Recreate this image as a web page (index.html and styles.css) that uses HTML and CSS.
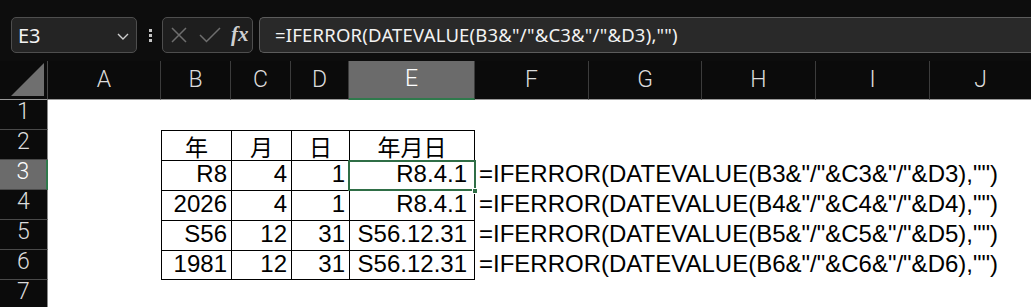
FILE: index.html
```html
<!DOCTYPE html>
<html lang="ja">
<head>
<meta charset="utf-8">
<title>Excel</title>
<link rel="stylesheet" href="styles.css">
</head>
<body>
<div class="app">
  <div class="toolbar">
    <div class="namebox">
      <span class="name">E3</span>
      <svg class="chev" width="12" height="7" viewBox="0 0 12 7"><path d="M1 1 L6 6 L11 1" fill="none" stroke="#cfcfcf" stroke-width="1.4"/></svg>
    </div>
    <div class="grip"><i></i><i></i><i></i></div>
    <div class="fxbox">
      <svg class="ico-x" width="16" height="16" viewBox="0 0 16 16"><path d="M1 1 L15 15 M15 1 L1 15" stroke="#6e6e6e" stroke-width="1.5" fill="none"/></svg>
      <svg class="ico-ok" width="22" height="16" viewBox="0 0 22 16"><path d="M1 8 L7.5 14.5 L21 1" stroke="#6e6e6e" stroke-width="1.5" fill="none"/></svg>
      <span class="fx">fx</span>
    </div>
    <div class="formula">=IFERROR(DATEVALUE(B3&amp;"/"&amp;C3&amp;"/"&amp;D3),"")</div>
  </div>

  <div class="sheet">
    <!-- header row -->
    <div class="corner"><svg width="33" height="33" viewBox="0 0 33 33"><path d="M0 33 L33 0 L33 33 Z" fill="#6f6f6f"/></svg></div>
    <div class="ch">A</div>
    <div class="ch">B</div>
    <div class="ch">C</div>
    <div class="ch">D</div>
    <div class="ch sel">E</div>
    <div class="ch">F</div>
    <div class="ch">G</div>
    <div class="ch">H</div>
    <div class="ch">I</div>
    <div class="ch last">J</div>

    <!-- row 1 -->
    <div class="rh">1</div>
    <div></div><div></div><div></div><div></div><div></div><div></div><div></div><div></div><div></div><div></div>

    <!-- row 2 -->
    <div class="rh">2</div>
    <div></div>
    <div class="t hd">年</div>
    <div class="t hd">月</div>
    <div class="t hd">日</div>
    <div class="t hd tr">年月日</div>
    <div></div><div></div><div></div><div></div><div></div>

    <!-- row 3 -->
    <div class="rh sel">3</div>
    <div></div>
    <div class="t num">R8</div>
    <div class="t num">4</div>
    <div class="t num">1</div>
    <div class="t num tr active">R8.4.1<span class="selbox"><span class="handle"></span></span></div>
    <div class="txt">=IFERROR(DATEVALUE(B3&amp;"/"&amp;C3&amp;"/"&amp;D3),"")</div>
    <div></div><div></div><div></div><div></div>

    <!-- row 4 -->
    <div class="rh">4</div>
    <div></div>
    <div class="t num">2026</div>
    <div class="t num">4</div>
    <div class="t num">1</div>
    <div class="t num tr">R8.4.1</div>
    <div class="txt">=IFERROR(DATEVALUE(B4&amp;"/"&amp;C4&amp;"/"&amp;D4),"")</div>
    <div></div><div></div><div></div><div></div>

    <!-- row 5 -->
    <div class="rh">5</div>
    <div></div>
    <div class="t num">S56</div>
    <div class="t num">12</div>
    <div class="t num">31</div>
    <div class="t num tr">S56.12.31</div>
    <div class="txt">=IFERROR(DATEVALUE(B5&amp;"/"&amp;C5&amp;"/"&amp;D5),"")</div>
    <div></div><div></div><div></div><div></div>

    <!-- row 6 -->
    <div class="rh">6</div>
    <div></div>
    <div class="t num tb">1981</div>
    <div class="t num tb">12</div>
    <div class="t num tb">31</div>
    <div class="t num tr tb">S56.12.31</div>
    <div class="txt">=IFERROR(DATEVALUE(B6&amp;"/"&amp;C6&amp;"/"&amp;D6),"")</div>
    <div></div><div></div><div></div><div></div>

    <!-- row 7 -->
    <div class="rh">7</div>
    <div></div><div></div><div></div><div></div><div></div><div></div><div></div><div></div><div></div><div></div>
  </div>
</div>
</body>
</html>
```

FILE: styles.css
```css
* { box-sizing: border-box; }
html, body { margin: 0; padding: 0; }
body {
  width: 1031px;
  height: 307px;
  overflow: hidden;
  background: #0d0d0d;
  font-family: "Liberation Sans", Arial, sans-serif;
}
.app { display: flex; flex-direction: column; }

/* ---------- formula bar ---------- */
.toolbar {
  height: 61px;
  display: flex;
  align-items: flex-start;
  padding: 17px 0 0 11px;
  background: #0d0d0d;
}
.namebox {
  width: 126px;
  height: 36px;
  background: #242424;
  border: 1px solid #4e4e4e;
  border-radius: 5px;
  display: flex;
  align-items: center;
  justify-content: space-between;
  padding: 0 7px 0 6px;
}
.name {
  color: #f2f2f2;
  font-family: "Noto Sans", "Noto Sans CJK JP", sans-serif;
  font-size: 20px;
  line-height: 1;
  padding-top: 1px;
}
.chev { margin-top: 2px; }
.grip {
  width: 25px;
  height: 36px;
  display: flex;
  flex-direction: column;
  align-items: center;
  justify-content: center;
  gap: 2px;
  padding-left: 2px;
}
.grip i {
  display: block;
  width: 3px;
  height: 3px;
  background: #c4c4c4;
}
.fxbox {
  width: 91px;
  height: 36px;
  background: #1e1e1e;
  border: 1px solid #4e4e4e;
  border-radius: 5px;
  display: flex;
  align-items: center;
  padding-left: 8px;
}
.ico-ok { margin-left: 12px; }
.fx {
  margin-left: 10px;
  color: #cfcfcf;
  font-family: "Liberation Serif", "DejaVu Serif", serif;
  font-style: italic;
  font-weight: bold;
  font-size: 21px;
  line-height: 1;
  margin-top: -2px;
}
.formula {
  flex: 1;
  margin-left: 6px;
  height: 36px;
  background: #292929;
  border: 1px solid #5c5c5c;
  border-right: none;
  border-radius: 5px 0 0 5px;
  color: #f2f2f2;
  font-family: "Noto Sans", "Noto Sans CJK JP", sans-serif;
  font-size: 18.5px;
  line-height: 34px;
  padding-left: 15px;
  white-space: nowrap;
  letter-spacing: 0.2px;
}

/* ---------- sheet grid ---------- */
.sheet {
  display: grid;
  grid-template-columns: 48px 113px 70px 60px 58px 126px 114px 113px 114px 114px 1fr;
  grid-template-rows: 39px repeat(7, 30px);
  background: #ffffff;
  height: 246px;
  overflow: hidden;
}
.corner {
  background: #0b0b0b;
  border-right: 1px solid #4a4a4a;
  border-bottom: 1px solid #9a9a9a;
  display: flex;
  align-items: flex-end;
  justify-content: flex-end;
  padding: 0 3px 3px 0;
}
.ch {
  background: #0b0b0b;
  border-right: 1px solid #3c3c3c;
  border-bottom: 1px solid #9a9a9a;
  color: #dcdcdc;
  font-family: Roboto, "Noto Sans", sans-serif;
  font-weight: 300;
  font-size: 23px;
  display: flex;
  align-items: center;
  justify-content: center;
  line-height: 24px;
  padding-bottom: 1px;
}
.ch.last { border-right: none; }
.ch.sel {
  background: #6b6b6b;
  color: #ffffff;
  border-bottom: 2px solid #2f7a4c;
}
.rh {
  background: #0b0b0b;
  border-right: 1px solid #8a8a8a;
  border-bottom: 1px solid #4a4a4a;
  color: #dcdcdc;
  font-family: Roboto, "Noto Sans", sans-serif;
  font-weight: 300;
  font-size: 23px;
  line-height: 24px;
  display: flex;
  justify-content: center;
  align-items: flex-start;
  padding-top: 0;
}
.rh.sel {
  background: #6b6b6b;
  color: #ffffff;
  border-right: 2px solid #2f7a4c;
}

/* ---------- table ---------- */
.t {
  border-left: 1px solid #000;
  border-top: 1px solid #000;
  color: #000;
  font-size: 24px;
  display: flex;
  align-items: center;
  white-space: nowrap;
}
.t.tr { border-right: 1px solid #000; }
.t.tb { border-bottom: 1px solid #000; }
.hd {
  justify-content: center;
  font-family: "Noto Sans CJK JP", sans-serif;
  font-size: 23px;
  line-height: 26px;
  padding-bottom: 0;
}
.num {
  justify-content: flex-end;
  font-family: "Liberation Sans", Arial, sans-serif;
  padding: 0 4px 3px 0;
  line-height: 26px;
}
.t.tr.num { padding-right: 7px; }
.active { position: relative; }
.selbox {
  position: absolute;
  left: -2px;
  top: -1px;
  right: -2px;
  bottom: -1px;
  border: 2px solid #2f6e46;
  pointer-events: none;
}
.handle {
  position: absolute;
  right: -4px;
  bottom: -5px;
  width: 6px;
  height: 6px;
  background: #2f6e46;
  border: 1px solid #ffffff;
}
.txt {
  color: #000;
  font-family: "Liberation Sans", Arial, sans-serif;
  font-size: 24px;
  line-height: 26px;
  white-space: nowrap;
  overflow: visible;
  display: flex;
  align-items: center;
  padding: 0 0 3px 4px;
  position: relative;
  z-index: 1;
}
```
